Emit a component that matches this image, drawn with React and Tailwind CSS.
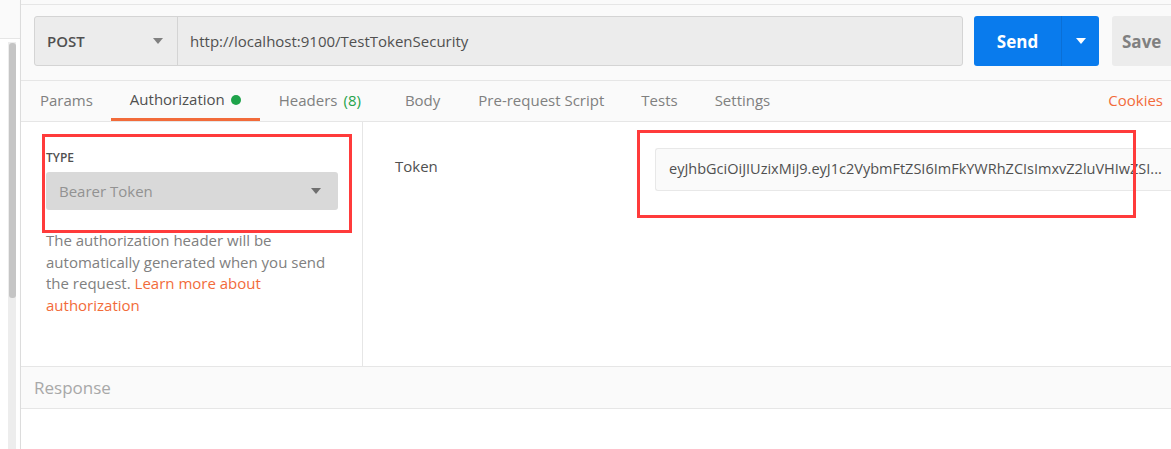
import React from "react";

const Caret = ({ className = "" }) => (
  <svg width="10" height="6" viewBox="0 0 10 6" className={className}>
    <path d="M0 0 L10 0 L5 6 Z" fill="currentColor" />
  </svg>
);

export default function App() {
  const token =
    "eyJhbGciOiJIUzixMiJ9.eyJ1c2VybmFtZSI6ImFkYWRhZCIsImxvZ2luVHIwZSI...";
  return (
    <div
      className="w-[1171px] h-[449px] overflow-hidden flex bg-white text-[#505050]"
      style={{ fontFamily: '"Open Sans", "Noto Sans", sans-serif' }}
    >
      {/* left strip */}
      <div className="w-[20px] shrink-0 flex flex-col bg-white">
        <div className="h-[39px] bg-[#fafafa] border-b border-[#e6e6e6]" />
        <div className="flex-1 pl-[8px] pt-[3px]">
          <div className="w-[8px] h-full bg-[#ededed] pt-[1px] pl-[1px]">
            <div className="w-[7px] h-[255px] bg-[#c5c5c5] rounded-[3px]" />
          </div>
        </div>
      </div>
      <div className="w-[1px] bg-[#dcdcdc] shadow-[1px_0_2px_rgba(0,0,0,0.08)] shrink-0" />

      {/* main */}
      <div className="flex-1 flex flex-col min-w-0 overflow-hidden">
        <div className="h-[5px] bg-[#fafafa] border-b border-[#e6e6e6]" />
        <div className="h-[76px] bg-[#fafafa] border-b border-[#e6e6e6] flex items-start pt-[11px] pl-[13px] overflow-hidden">
          <div className="shrink-0 flex h-[50px] w-[929px] border border-[#d4d4d4] rounded-[3px] bg-[#ececec]">
            <div className="w-[143px] flex items-center justify-between pl-[12px] pr-[14px] border-r border-[#d4d4d4]">
              <span className="text-[15px] font-semibold text-[#505050]">POST</span>
              <Caret className="text-[#808080]" />
            </div>
            <div className="flex-1 flex items-center pl-[12px] text-[15px] text-[#505050]">
              http://localhost:9100/TestTokenSecurity
            </div>
          </div>
          <div className="shrink-0 ml-[11px] flex h-[50px] w-[125px] rounded-[3px] bg-[#097bed] text-white">
            <div className="w-[88px] flex items-center justify-center pt-[2px] text-[17px] font-bold border-r border-[#0a6fd6]">
              Send
            </div>
            <div className="flex-1 flex items-center justify-center">
              <Caret />
            </div>
          </div>
          <div className="shrink-0 ml-[13px] h-[50px] w-[80px] rounded-[3px] bg-[#ececec] flex items-center pt-[2px] pl-[10px] text-[17px] font-bold text-[#808080]">
            Save
          </div>
        </div>

        {/* tabs */}
        <div className="h-[41px] bg-[#fafafa] border-b border-[#e6e6e6] flex items-stretch text-[15px] text-[#808080] pl-[19px] pr-[8px]">
          <div className="flex items-center pb-[2px]">Params</div>
          <div className="ml-[18px] px-[19px] flex items-center text-[#505050] border-b-[3px] border-[#f26b3a]">
            Authorization
            <span className="ml-[6px] w-[10px] h-[10px] rounded-full bg-[#1ea34a]" />
          </div>
          <div className="ml-[19px] flex items-center pb-[2px]">
            Headers <span className="ml-[6px] text-[#26a34a]">(8)</span>
          </div>
          <div className="ml-[44px] flex items-center pb-[2px]">Body</div>
          <div className="ml-[38px] flex items-center pb-[2px]">Pre-request Script</div>
          <div className="ml-[37px] flex items-center pb-[2px]">Tests</div>
          <div className="ml-[37px] flex items-center pb-[2px]">Settings</div>
          <div className="ml-auto flex items-center pb-[2px] text-[#f26b3a]">Cookies</div>
        </div>

        {/* auth panel */}
        <div className="h-[245px] flex border-b border-[#e6e6e6] bg-white">
          <div className="w-[342px] shrink-0 border-r border-[#e6e6e6] pl-[25px] pr-[20px] pt-[28px] relative">
            <div className="text-[12px] font-semibold text-[#505050] leading-[16px]">TYPE</div>
            <div className="mt-[6px] mr-[4px] h-[38px] rounded-[3px] bg-[#d9d9d9] flex items-center justify-between pl-[13px] pr-[17px]">
              <span className="text-[15px] text-[#929292]">Bearer Token</span>
              <Caret className="text-[#6f6f6f]" />
            </div>
            <p className="mt-[20px] text-[15px] leading-[21.7px] text-[#808080]">
              The authorization header will be automatically generated when you send the request.{" "}
              <span className="text-[#f26b3a]">Learn more about authorization</span>
            </p>
            <div className="absolute left-[21px] top-[12px] w-[310px] h-[99px] border-[3px] border-[#ff3b3b]" />
          </div>
          <div className="flex-1 relative flex items-start pt-[26px] min-w-0">
            <div className="w-[292px] shrink-0 pl-[32px] pt-[7px] text-[15px] text-[#505050]">Token</div>
            <div className="flex-1 min-w-0 h-[43px] bg-[#fafafa] border border-[#e8e8e8] border-r-0 rounded-l-[3px] flex items-center pl-[13px] pb-[1px] overflow-hidden whitespace-nowrap text-[14.5px] text-[#505050]">
              {token}
            </div>
            <div className="absolute left-[274px] top-[8px] w-[499px] h-[88px] border-[3px] border-[#ff3b3b]" />
          </div>
        </div>

        {/* response */}
        <div className="h-[42px] bg-[#fafafa] border-b border-[#e6e6e6] flex items-center pl-[13px] text-[17px] text-[#a8a8a8]">
          Response
        </div>
        <div className="flex-1 bg-white" />
      </div>
    </div>
  );
}
